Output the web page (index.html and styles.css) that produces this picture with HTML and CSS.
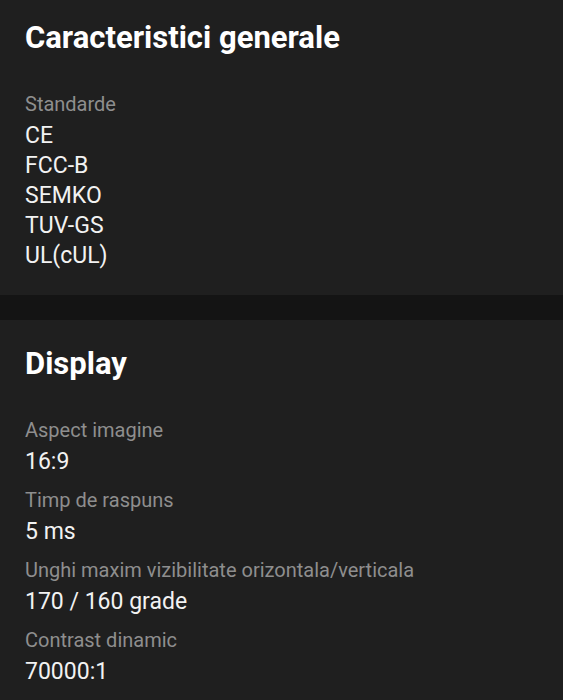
FILE: index.html
```html
<!DOCTYPE html>
<html lang="ro">
<head>
    <meta charset="UTF-8">
    <meta name="viewport" content="width=device-width, initial-scale=1.0">
    <title>Specificatii</title>
    <link rel="stylesheet" href="styles.css">
</head>
<body>
    <div class="page">
        <section class="card">
            <h2>Caracteristici generale</h2>
            <div class="specs">
                <div class="spec">
                    <div class="label">Standarde</div>
                    <div class="value">CE<br>FCC-B<br>SEMKO<br>TUV-GS<br>UL(cUL)</div>
                </div>
            </div>
        </section>
        <section class="card">
            <h2>Display</h2>
            <div class="specs">
                <div class="spec">
                    <div class="label">Aspect imagine</div>
                    <div class="value">16:9</div>
                </div>
                <div class="spec">
                    <div class="label">Timp de raspuns</div>
                    <div class="value">5 ms</div>
                </div>
                <div class="spec">
                    <div class="label">Unghi maxim vizibilitate orizontala/verticala</div>
                    <div class="value">170 / 160 grade</div>
                </div>
                <div class="spec">
                    <div class="label">Contrast dinamic</div>
                    <div class="value">70000:1</div>
                </div>
            </div>
        </section>
    </div>
</body>
</html>
```

FILE: styles.css
```css
body {
    margin: 0;
    background: #141414;
    font-family: Roboto, "Noto Sans", sans-serif;
    overflow: hidden;
}
.page {
    display: flex;
    flex-direction: column;
    gap: 25px;
    margin-top: -6px; /* list is scrolled a little */
}
.card {
    background: #1f1f1f;
    padding: 28px 25px 24px;
}
h2 {
    margin: 0;
    font-size: 31px;
    line-height: 32px;
    font-weight: 700;
    color: #fff;
}
.specs {
    display: flex;
    flex-direction: column;
    gap: 11px;
    margin-top: 38px;
}
.label {
    font-size: 20px;
    line-height: 24px;
    color: #8e8e8e;
    margin-bottom: 5px;
}
.value {
    font-size: 23px;
    line-height: 30px;
    color: #f2f2f2;
}
```
